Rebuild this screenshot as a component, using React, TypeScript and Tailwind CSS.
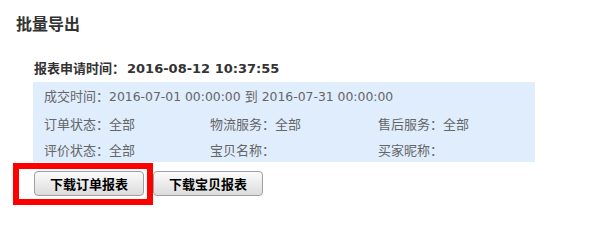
const cjk = "font-['Noto_Sans_CJK_SC',sans-serif]";
const num = "font-['DejaVu_Sans','Noto_Sans_CJK_SC',sans-serif]";

function Field({ label, value }: { label: string; value?: string }) {
  return (
    <div className="flex items-center">
      <span>{label}：</span>
      {value && <span>{value}</span>}
    </div>
  );
}

function Button({ children }: { children: string }) {
  return (
    <button className="h-[25px] px-[15px] rounded-[4px] border border-[#a0a0a0] bg-gradient-to-b from-[#fbfbfb] to-[#dcdcdc] text-[13px] font-bold text-black leading-none">
      {children}
    </button>
  );
}

export default function App() {
  return (
    <div className={`w-[600px] h-[223px] bg-white ${cjk} text-[#333]`}>
      <h1 className="pt-[14px] pl-[16px] text-[16px] leading-[18px] font-bold">批量导出</h1>

      <div className="ml-[33px] mt-[27px] w-[502px]">
        <div className="h-[23px] pb-[4px] flex items-center text-[13px] font-bold pl-[1px]">
          <p>
            报表申请时间：<span className={`${num} ml-[2px] text-[13px]`}>2016-08-12 10:37:55</span>
          </p>
        </div>

        <div className="bg-[#dfedfd] h-[80px] pl-[11px] pt-[1px] text-[13px] text-[#666]">
          <div className="h-[27px] flex items-center">
            <p>
              成交时间：<span className={`${num} text-[12.4px]`}>2016-07-01 00:00:00</span>
              <span className="mx-[4px]">到</span>
              <span className={`${num} text-[12.4px]`}>2016-07-31 00:00:00</span>
            </p>
          </div>
          <div className="grid grid-cols-[166px_168px_1fr] h-[27px] items-center">
            <Field label="订单状态" value="全部" />
            <Field label="物流服务" value="全部" />
            <Field label="售后服务" value="全部" />
          </div>
          <div className="grid grid-cols-[166px_168px_1fr] h-[26px] items-center">
            <Field label="评价状态" value="全部" />
            <Field label="宝贝名称" />
            <Field label="买家昵称" />
          </div>
        </div>

        <div className="relative flex gap-[9px] mt-[9px] ml-[1px]">
          <Button>下载订单报表</Button>
          <Button>下载宝贝报表</Button>
          <div className="absolute left-[-21px] top-[-8px] w-[140px] h-[42px] border-[6px] border-[#ff0000] pointer-events-none" />
        </div>
      </div>
    </div>
  );
}
